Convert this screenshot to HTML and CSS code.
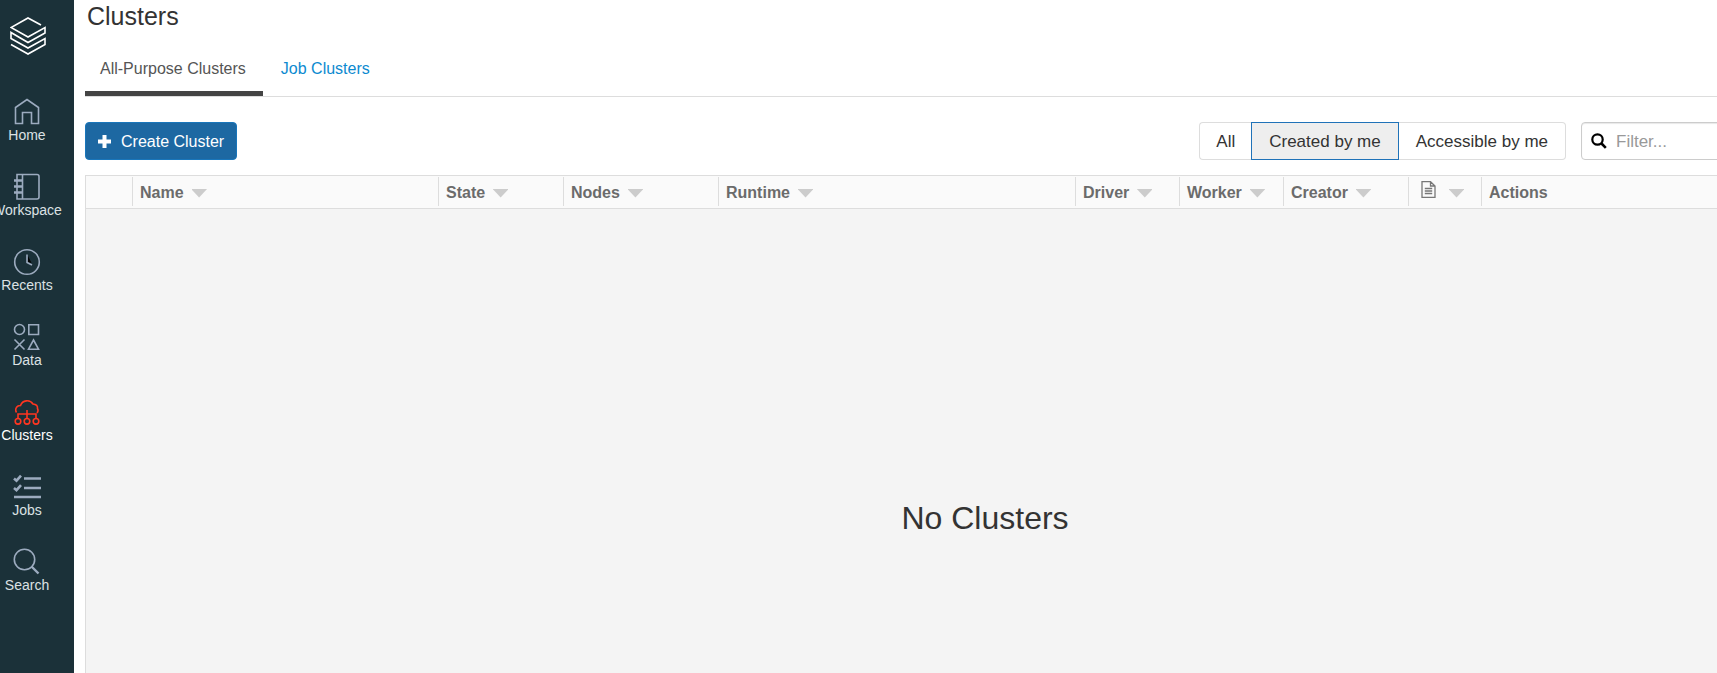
FILE: index.html
```html
<!DOCTYPE html>
<html lang="en">
<head>
<meta charset="utf-8">
<title>Clusters</title>
<link rel="stylesheet" href="styles.css">
</head>
<body>
<div class="app">
  <nav class="sidebar">
    <a class="logo" href="#" aria-label="Workspace home">
      <svg width="36" height="38" viewBox="0 0 36 38" fill="none" stroke="#fff" stroke-width="1.6"><path d="M31 8 18 1 1 10.500 18 20 35 10.500V16L18 25.500 1 15.500v6L18 31l17-9.500v6L18 37 1 27.500"/></svg>
    </a>
    <a class="item" href="#">
      <svg width="28" height="28" viewBox="0 0 28 28"><path d="M2.500 25.500v-16L14 1.500l11.500 8v16h-7V14.500h-9v11z"/></svg>
      <span>Home</span>
    </a>
    <a class="item" href="#">
      <svg width="28" height="28" viewBox="0 0 28 28"><path d="M4 1.500h20a2 2 0 0 1 2 2v20.500a2 2 0 0 1-2 2H4zM9.500 1.500v24.500"/><path d="M1 7.500h8.500M1 13.500h8.500M1 19.500h8.500" stroke-width="2.600"/></svg>
      <span>Workspace</span>
    </a>
    <a class="item" href="#">
      <svg width="28" height="28" viewBox="0 0 28 28"><circle cx="14" cy="14" r="12.300"/><path d="M15 8l3.500 7-3.500-1z" fill="#000" stroke="none"/><path d="M14 6.500v8l5 2.500"/></svg>
      <span>Recents</span>
    </a>
    <a class="item" href="#">
      <svg width="28" height="28" viewBox="0 0 28 28"><circle cx="6.500" cy="6.500" r="5"/><path d="M15.800 1.800h9.700v9.700h-9.700zM1.500 16.500l10 10M11.500 16.500l-10 10M20.500 17l5 9.200h-10z"/></svg>
      <span>Data</span>
    </a>
    <a class="item active" href="#">
      <svg width="28" height="28" viewBox="0 0 28 28"><path d="M3.500 14.500A4.500 4.500 0 0 1 5 8q1.500-.700 2.500-.500A7 7 0 0 1 20 6q5 .500 4.500 4.500a4 4 0 0 1-.5 4.500M14 12v8M5 20.500v-4.500h18v4.500"/><circle cx="5" cy="23.300" r="2.800"/><circle cx="14" cy="23.300" r="2.800"/><circle cx="23" cy="23.300" r="2.800"/></svg>
      <span>Clusters</span>
    </a>
    <a class="item" href="#">
      <svg width="28" height="28" viewBox="0 0 28 28"><path d="M11 5.500h17M11 15h17M1 24h27M1 5.500l2.500 2.200 4.500-5M1 15l2.500 2.200 4.500-5" stroke-width="2.600"/></svg>
      <span>Jobs</span>
    </a>
    <a class="item" href="#">
      <svg width="28" height="28" viewBox="0 0 28 28"><circle cx="11.500" cy="11.500" r="10.200"/><path d="M18.500 18.500l7 7" stroke-width="2.400"/></svg>
      <span>Search</span>
    </a>
  </nav>
  <main class="main">
    <div class="content">
      <h1>Clusters</h1>
      <nav class="tabs">
        <a class="tab selected" href="#">All-Purpose Clusters</a>
        <a class="tab" href="#">Job Clusters</a>
      </nav>
      <div class="toolbar">
        <button class="create" type="button">
          <svg width="13" height="13" viewBox="0 0 13 13"><path d="M4.500 0h4v4.500H13v4H8.500V13h-4V8.500H0v-4h4.500z" fill="#fff"/></svg>
          Create Cluster
        </button>
        <div class="filters">
          <div class="segments">
            <button type="button">All</button>
            <button class="on" type="button">Created by me</button>
            <button type="button">Accessible by me</button>
          </div>
          <label class="search">
            <svg width="16" height="16" viewBox="0 0 16 16" fill="none" stroke="#000"><circle cx="6.500" cy="6.500" r="5.200" stroke-width="2.200"/><path d="M10.500 10.500l4.300 4.300" stroke-width="2.600"/></svg>
            <input type="text" placeholder="Filter..." aria-label="Filter clusters">
          </label>
        </div>
      </div>
      <table class="grid">
        <colgroup><col class="c-pin"><col class="c-name"><col class="c-state"><col class="c-nodes"><col class="c-runtime"><col class="c-type"><col class="c-type"><col class="c-creator"><col class="c-doc"><col></colgroup>
        <thead>
          <tr>
            <td></td>
            <th><button class="head">Name <i class="arrow"></i></button></th>
            <th><button class="head">State <i class="arrow"></i></button></th>
            <th><button class="head">Nodes <i class="arrow"></i></button></th>
            <th><button class="head">Runtime <i class="arrow"></i></button></th>
            <th><button class="head">Driver <i class="arrow"></i></button></th>
            <th><button class="head">Worker <i class="arrow"></i></button></th>
            <th><button class="head">Creator <i class="arrow"></i></button></th>
            <th><button class="head doc" aria-label="Notebooks"><svg width="15" height="17" viewBox="0 0 15 17" fill="none" stroke="#777" stroke-width="1.300"><path d="M1 .700h8.500L14 5v11.300H1zM9.500 .700V5H14M3.800 7.500h7.400M3.800 10h7.400M3.800 12.500h7.400"/></svg><i class="arrow"></i></button></th>
            <th><div class="head">Actions</div></th>
          </tr>
        </thead>
        <tbody>
          <tr><td class="empty" colspan="10">No Clusters</td></tr>
        </tbody>
      </table>
    </div>
  </main>
</div>
</body>
</html>
```
FILE: styles.css
```css
* { box-sizing: border-box; }

body {
  margin: 0;
  font: 16px/20px "Liberation Sans", Arial, sans-serif;
  color: #333;
  background: #fff;
  overflow: hidden;
}

button, input { font: inherit; color: inherit; }
a { text-decoration: none; }

.app { display: flex; min-height: 100vh; }

.sidebar {
  flex: 0 0 74px;
  min-width: 0;
  overflow: hidden;
  padding: 17px 20px 0 0;
  background: #1b3139;
  display: flex;
  flex-direction: column;
}

.logo { height: 81px; padding-left: 10px; }

.item {
  height: 75px;
  display: flex;
  flex-direction: column;
  align-items: center;
  gap: 1px;
  font-size: 14px;
  line-height: 16px;
  color: #dce1e4;
}
.item svg { flex: none; fill: none; stroke: #9cabbf; stroke-width: 1.600; }
.item.active { color: #fff; }
.item.active svg { stroke: #ff3621; }

.main { flex: 1; min-width: 0; overflow: hidden; padding-left: 11px; display: flex; }

/* The list is wider than the window and runs past its right edge. */
.content { flex: 0 0 calc(100% + 167px); display: flex; flex-direction: column; }

h1 { margin: 0 0 0 2px; font-size: 25px; line-height: 33px; font-weight: 400; }

.tabs { display: flex; height: 64px; border-bottom: 1px solid #ddd; }
.tab { padding: 26px 18px 0; height: 63px; color: #0c8ad0; }
.tab.selected { color: #555; padding: 26px 17px 0 15px; border-bottom: 5px solid #444; }

.toolbar { display: flex; justify-content: space-between; margin: 25px 0 15px; }

.create {
  display: flex;
  align-items: center;
  gap: 10px;
  height: 38px;
  padding: 1px 12px 0;
  color: #fff;
  background: #1d68a2;
  border: 1px solid #1976bb;
  border-radius: 4px;
}

.filters { display: flex; gap: 15px; }

.segments { display: flex; font-size: 17px; }
.segments button {
  height: 38px;
  padding: 1px 16px 0;
  background: #fff;
  border: 1px solid #ddd;
}
.segments button:first-child { border-right: 0; border-radius: 4px 0 0 4px; }
.segments button:last-child { padding: 1px 17px 0; border-left: 0; border-radius: 0 4px 4px 0; }
.segments .on { padding: 1px 17px 0; background: #eee; border-color: #1f72b8; }

.search {
  width: 303px;
  height: 38px;
  padding: 0 9px;
  display: flex;
  align-items: center;
  gap: 9px;
  border: 1px solid #ccc;
  border-radius: 4px;
  box-shadow: inset 0 1px 1px #e8e8e8;
}
.search input { flex: 1; min-width: 0; padding: 1px 0 0; border: 0; outline: 0; background: none; font-size: 17px; }
.search input::placeholder { color: #999; opacity: 1; }

.grid {
  flex: 1;
  width: 100%;
  table-layout: fixed;
  border-collapse: separate;
  border-spacing: 0;
  border-left: 1px solid #ddd;
  background: #f4f4f4;
}
.c-pin { width: 46px; }
.c-name { width: 306px; }
.c-state { width: 125px; }
.c-nodes { width: 155px; }
.c-runtime { width: 357px; }
.c-type { width: 104px; }
.c-creator { width: 125px; }
.c-doc { width: 73px; }

.grid thead th, .grid thead td {
  height: 34px;
  padding: 1px 0 2px;
  background: #fafafa;
  border-top: 1px solid #ddd;
  border-bottom: 1px solid #ddd;
}
.head {
  display: flex;
  align-items: center;
  gap: 8px;
  width: 100%;
  height: 29px;
  padding: 3px 0 0 7px;
  border: 0;
  border-left: 1px solid #ddd;
  background: none;
  font-weight: 700;
  color: #6b6b6b;
}
.head.doc { padding-left: 12px; gap: 13px; }
.head.doc svg { margin-bottom: 8px; }
.arrow { width: 15px; height: 9px; background: #ccc; clip-path: polygon(0 0, 100% 0, 100% 1px, 50% 100%, 0 1px); }

.empty {
  padding: 291px 0 0;
  vertical-align: top;
  text-align: center;
  font-size: 32px;
  line-height: 36px;
}
```
